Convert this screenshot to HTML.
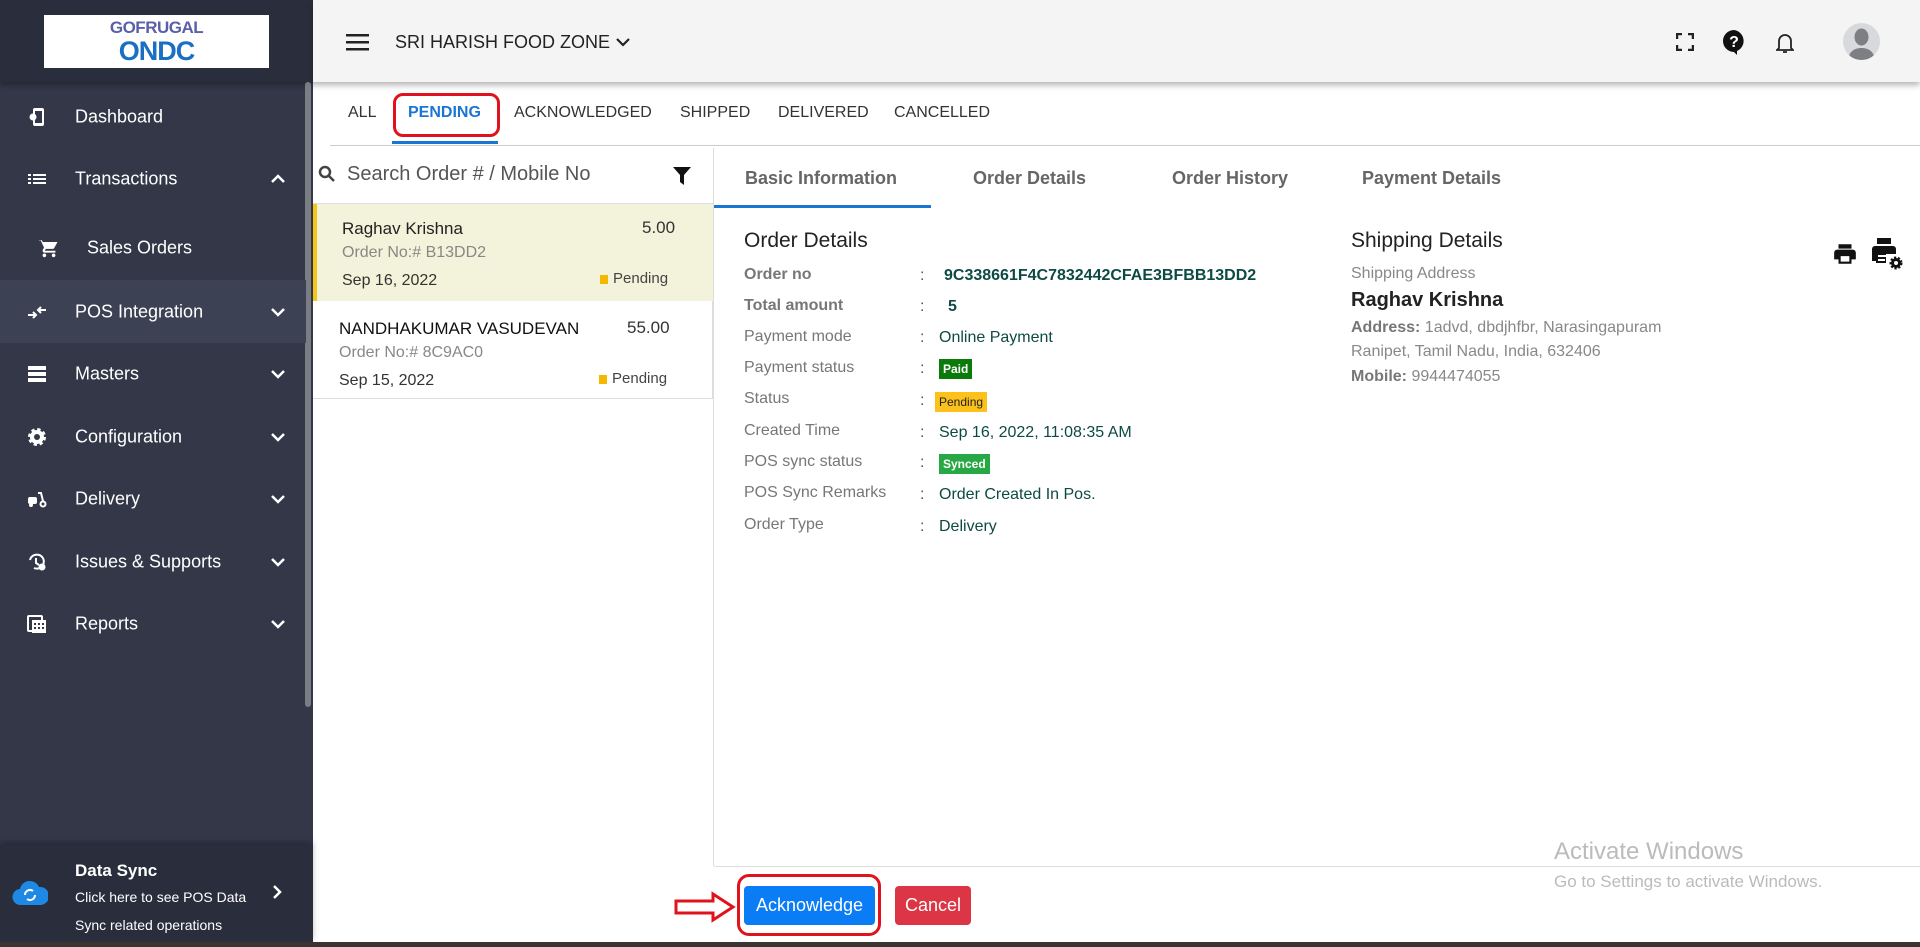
<!DOCTYPE html>
<html><head><meta charset="utf-8"><style>
*{box-sizing:border-box;margin:0;padding:0}
body{width:1920px;height:947px;overflow:hidden;background:#fff;font-family:"Liberation Sans",sans-serif;position:relative}
.abs{position:absolute}
#sb{left:0;top:0;width:313px;height:947px;background:#333748}
#logoarea{left:0;top:0;width:313px;height:82px;background:#2a2e3c;box-shadow:0 3px 6px rgba(0,0,0,.3)}
#logo{left:44px;top:15px;width:225px;height:53px;background:#fff;text-align:center}
.si{position:absolute;left:0;width:306px;height:60px;color:#fff;font-size:18px}
.si .t{position:absolute;left:75px;top:50%;transform:translateY(-50%)}
.si .ic{position:absolute;left:27px;top:50%;transform:translateY(-50%);width:20px;height:20px}
.si .ch{position:absolute;left:270px;top:50%;transform:translateY(-50%)}
#hdr{left:313px;top:0;width:1607px;height:82px;background:#f4f4f4;box-shadow:0 3px 6px rgba(0,0,0,.3)}
.tab{position:absolute;top:104px;font-size:16px;color:#333}
.lbl{position:absolute;left:744px;font-size:16px;color:#777}
.col{position:absolute;left:920px;font-size:16px;color:#555}
.val{position:absolute;left:939px;font-size:16px;color:#0d4a44}
.badge{display:inline-block;font-size:12px;font-weight:bold;padding:3px 4px;color:#fff}
</style></head><body>
<div id="sb" class="abs"></div>
<div id="logoarea" class="abs"><div id="logo" class="abs">
<div style="font-weight:bold;font-size:17px;color:#5a5fa8;margin-top:3px;letter-spacing:-0.5px">GOFRUGAL</div>
<div style="font-weight:bold;font-size:27px;color:#1b6fc2;line-height:26px;letter-spacing:-1px">ONDC</div></div></div>
<div class="abs" style="left:305px;top:82px;width:6px;height:625px;background:#7b7d85;border-radius:3px"></div>

<div class="si" style="top:87px"><svg class="ic" viewBox="0 0 20 20"><rect x="6" y="1" width="11" height="18" rx="2" fill="#fff"/><rect x="8" y="4" width="7" height="12" fill="#333748"/><circle cx="6" cy="10" r="3.5" fill="#fff"/></svg><span class="t">Dashboard</span></div>
<div class="si" style="top:149px"><svg class="ic" viewBox="0 0 20 20" fill="#fff"><rect x="1" y="5" width="3" height="2"/><rect x="6" y="5" width="13" height="2"/><rect x="1" y="9" width="3" height="2"/><rect x="6" y="9" width="13" height="2"/><rect x="1" y="13" width="3" height="2"/><rect x="6" y="13" width="13" height="2"/></svg><span class="t">Transactions</span><svg class="ch" width="16" height="10" viewBox="0 0 16 10"><path d="M2 8L8 2L14 8" stroke="#fff" stroke-width="2.5" fill="none"/></svg></div>
<div class="si" style="top:218px"><svg class="ic" style="left:38px;width:22px;height:22px" viewBox="0 0 24 24" fill="#fff"><path d="M7 18c-1.1 0-2 .9-2 2s.9 2 2 2 2-.9 2-2-.9-2-2-2zM1 2v2h2l3.6 7.6-1.4 2.4c-.1.3-.2.6-.2 1 0 1.1.9 2 2 2h12v-2H7.4l1.1-2h7.5c.8 0 1.4-.4 1.7-1l3.6-6.5H5.2l-.9-2H1zm16 16c-1.1 0-2 .9-2 2s.9 2 2 2 2-.9 2-2-.9-2-2-2z"/></svg><span class="t" style="left:87px">Sales Orders</span></div>
<div class="si" style="top:280px;height:63px;background:#3c4154;width:306px"><svg class="ic" viewBox="0 0 20 20" fill="none" stroke="#fff" stroke-width="2"><path d="M1 13h8M6 10l3 3-3 3M19 8h-8M14 5l-3 3 3 3"/></svg><span class="t">POS Integration</span><svg class="ch" width="16" height="10" viewBox="0 0 16 10"><path d="M2 2L8 8L14 2" stroke="#fff" stroke-width="2.5" fill="none"/></svg></div>
<div class="si" style="top:344px"><svg class="ic" viewBox="0 0 20 20" fill="#fff"><rect x="1" y="2" width="18" height="4"/><rect x="1" y="8" width="18" height="4"/><rect x="1" y="14" width="18" height="4"/></svg><span class="t">Masters</span><svg class="ch" width="16" height="10" viewBox="0 0 16 10"><path d="M2 2L8 8L14 2" stroke="#fff" stroke-width="2.5" fill="none"/></svg></div>
<div class="si" style="top:407px"><svg class="ic" viewBox="0 0 20 20"><circle cx="10" cy="10" r="7" fill="#fff" stroke="#fff" stroke-width="4" stroke-dasharray="3 2.5"/><circle cx="10" cy="10" r="3" fill="#333748"/></svg><span class="t">Configuration</span><svg class="ch" width="16" height="10" viewBox="0 0 16 10"><path d="M2 2L8 8L14 2" stroke="#fff" stroke-width="2.5" fill="none"/></svg></div>
<div class="si" style="top:469px"><svg class="ic" viewBox="0 0 20 20" fill="#fff"><rect x="1" y="8" width="9" height="7" rx="2"/><circle cx="4" cy="16" r="2"/><circle cx="16" cy="15" r="2.5" fill="none" stroke="#fff" stroke-width="2"/><path d="M11 4h3l2 8" stroke="#fff" stroke-width="2" fill="none"/></svg><span class="t">Delivery</span><svg class="ch" width="16" height="10" viewBox="0 0 16 10"><path d="M2 2L8 8L14 2" stroke="#fff" stroke-width="2.5" fill="none"/></svg></div>
<div class="si" style="top:532px"><svg class="ic" viewBox="0 0 20 20"><path d="M3 8a7 7 0 1 1 4 8" stroke="#fff" stroke-width="2" fill="none"/><path d="M9 6v5l3 2" stroke="#fff" stroke-width="2" fill="none"/><circle cx="15" cy="15" r="3.5" fill="#fff"/></svg><span class="t">Issues &amp; Supports</span><svg class="ch" width="16" height="10" viewBox="0 0 16 10"><path d="M2 2L8 8L14 2" stroke="#fff" stroke-width="2.5" fill="none"/></svg></div>
<div class="si" style="top:594px"><svg class="ic" viewBox="0 0 20 20" fill="#fff"><rect x="1" y="2" width="14" height="15" rx="1" fill="none" stroke="#fff" stroke-width="2"/><rect x="5" y="6" width="14" height="13"/><g fill="#333748"><rect x="7" y="9" width="2" height="2"/><rect x="11" y="9" width="2" height="2"/><rect x="15" y="9" width="2" height="2"/><rect x="7" y="13" width="2" height="2"/><rect x="11" y="13" width="2" height="2"/><rect x="15" y="13" width="2" height="2"/></g></svg><span class="t">Reports</span><svg class="ch" width="16" height="10" viewBox="0 0 16 10"><path d="M2 2L8 8L14 2" stroke="#fff" stroke-width="2.5" fill="none"/></svg></div>

<div class="abs" style="left:0;top:845px;width:313px;height:97px;background:#2a2e3c;box-shadow:0 -3px 6px rgba(0,0,0,.25)"></div>
<svg class="abs" style="left:12px;top:877px" width="36" height="32" viewBox="0 0 36 32"><path d="M9 28a8 8 0 0 1-1-16 10 10 0 0 1 19-2 8 8 0 0 1 2 18z" fill="#1e88e5"/><path d="M13 18a5 5 0 0 1 8-4M23 18a5 5 0 0 1-8 4" stroke="#fff" stroke-width="2" fill="none"/></svg>
<div class="abs" style="left:75px;top:861px;color:#fff;font-weight:bold;font-size:17px">Data Sync</div>
<div class="abs" style="left:75px;top:889px;color:#fff;font-size:14px">Click here to see POS Data</div>
<div class="abs" style="left:75px;top:917px;color:#fff;font-size:14px">Sync related operations</div>
<svg class="abs" style="left:272px;top:884px" width="10" height="16" viewBox="0 0 10 16"><path d="M2 2l6 6-6 6" stroke="#fff" stroke-width="2.5" fill="none"/></svg>
<div class="abs" style="left:0;top:942px;width:1920px;height:5px;background:#3a3530"></div>

<div id="hdr" class="abs"></div>
<svg class="abs" style="left:346px;top:33px" width="23" height="18" viewBox="0 0 23 18" fill="#222"><rect y="1" width="23" height="2.5"/><rect y="8" width="23" height="2.5"/><rect y="15" width="23" height="2.5"/></svg>
<div class="abs" style="left:395px;top:32px;font-size:18px;color:#222">SRI HARISH FOOD ZONE</div>
<svg class="abs" style="left:616px;top:37px" width="14" height="10" viewBox="0 0 14 10"><path d="M1 2l6 6 6-6" stroke="#222" stroke-width="2.2" fill="none"/></svg>
<svg class="abs" style="left:1676px;top:33px" width="18" height="18" viewBox="0 0 18 18" fill="none" stroke="#222" stroke-width="2.5"><path d="M1 6V1h5M12 1h5v5M17 12v5h-5M6 17H1v-5"/></svg>
<svg class="abs" style="left:1722px;top:29px" width="24" height="26" viewBox="0 0 24 26"><path d="M12 1a11 11 0 1 0 0 22l3 3v-4a11 11 0 0 0-3-21z" fill="#111"/><text x="12" y="18" font-size="16" font-weight="bold" fill="#fff" text-anchor="middle" font-family="Liberation Sans">?</text></svg>
<svg class="abs" style="left:1776px;top:32px" width="18" height="22" viewBox="0 0 18 22" fill="none" stroke="#222" stroke-width="1.8"><path d="M3 16V9a6 6 0 0 1 12 0v7l2 2H1zM7 20h4"/></svg>
<div class="abs" style="left:1843px;top:23px;width:37px;height:37px;border-radius:50%;background:#d7d9dc;overflow:hidden"><svg width="37" height="37" viewBox="0 0 37 37"><ellipse cx="18.5" cy="14" rx="7" ry="8.5" fill="#7d7f83"/><path d="M5 37c1-9 7-12 13.5-12S31 28 32 37z" fill="#7d7f83"/></svg></div>

<div class="tab" style="left:348px">ALL</div>
<div class="tab" style="left:408px;color:#1976d2;font-weight:bold">PENDING</div>
<div class="tab" style="left:514px">ACKNOWLEDGED</div>
<div class="tab" style="left:680px">SHIPPED</div>
<div class="tab" style="left:778px">DELIVERED</div>
<div class="tab" style="left:894px">CANCELLED</div>
<div class="abs" style="left:393px;top:93px;width:107px;height:44px;border:3px solid #e0121b;border-radius:10px"></div>
<div class="abs" style="left:392px;top:141px;width:106px;height:3px;background:#1976d2"></div>
<div class="abs" style="left:330px;top:145px;width:1590px;height:1px;background:#ccc"></div>

<svg class="abs" style="left:318px;top:165px" width="18" height="18" viewBox="0 0 18 18" fill="none" stroke="#444" stroke-width="2.5"><circle cx="7" cy="7" r="5"/><path d="M11 11l5 5"/></svg>
<div class="abs" style="left:347px;top:163px;font-size:20px;color:#555">Search Order # / Mobile No</div>
<svg class="abs" style="left:672px;top:166px" width="20" height="20" viewBox="0 0 20 20"><path d="M1 1h18l-7 8v10l-4-3V9z" fill="#111"/></svg>
<div class="abs" style="left:313px;top:203px;width:400px;height:1px;background:#ddd"></div>
<div class="abs" style="left:313px;top:204px;width:400px;height:97px;background:#f3f2da;border-left:4px solid #f5c518"></div>
<div class="abs" style="left:342px;top:219px;font-size:17px;color:#222">Raghav Krishna</div>
<div class="abs" style="left:642px;top:218px;font-size:17px;color:#333">5.00</div>
<div class="abs" style="left:342px;top:244px;font-size:16px;color:#888">Order No:# B13DD2</div>
<div class="abs" style="left:342px;top:272px;font-size:16px;color:#333">Sep 16, 2022</div>
<div class="abs" style="left:600px;top:275px;width:8px;height:9px;background:#f5b800"></div>
<div class="abs" style="left:613px;top:270px;font-size:15px;color:#444">Pending</div>
<div class="abs" style="left:313px;top:301px;width:400px;height:98px;border-bottom:1px solid #ddd;border-right:1px solid #ddd"></div>
<div class="abs" style="left:339px;top:319px;font-size:17px;color:#111">NANDHAKUMAR VASUDEVAN</div>
<div class="abs" style="left:627px;top:318px;font-size:17px;color:#333">55.00</div>
<div class="abs" style="left:339px;top:344px;font-size:16px;color:#888">Order No:# 8C9AC0</div>
<div class="abs" style="left:339px;top:372px;font-size:16px;color:#333">Sep 15, 2022</div>
<div class="abs" style="left:599px;top:375px;width:8px;height:9px;background:#f5b800"></div>
<div class="abs" style="left:612px;top:370px;font-size:15px;color:#444">Pending</div>

<div class="abs" style="left:713px;top:148px;width:1px;height:718px;background:#ddd"></div>
<div class="abs" style="left:714px;top:866px;width:1206px;height:1px;background:#ddd"></div>
<div class="abs" style="left:745px;top:168px;font-size:18px;font-weight:bold;color:#666">Basic Information</div>
<div class="abs" style="left:973px;top:168px;font-size:18px;font-weight:bold;color:#666">Order Details</div>
<div class="abs" style="left:1172px;top:168px;font-size:18px;font-weight:bold;color:#666">Order History</div>
<div class="abs" style="left:1362px;top:168px;font-size:18px;font-weight:bold;color:#666">Payment Details</div>
<div class="abs" style="left:714px;top:205px;width:217px;height:3px;background:#1976d2"></div>

<div class="abs" style="left:744px;top:229px;font-size:21px;color:#222">Order Details</div>
<div class="lbl" style="top:266px;font-weight:bold">Order no</div><div class="col" style="top:267px">:</div><div class="val" style="top:267px;left:944px;font-weight:bold">9C338661F4C7832442CFAE3BFBB13DD2</div>
<div class="lbl" style="top:297px;font-weight:bold">Total amount</div><div class="col" style="top:298px">:</div><div class="val" style="top:298px;left:948px;font-weight:bold">5</div>
<div class="lbl" style="top:328px">Payment mode</div><div class="col" style="top:329px">:</div><div class="val" style="top:329px">Online Payment</div>
<div class="lbl" style="top:359px">Payment status</div><div class="col" style="top:360px">:</div><div class="val" style="top:359px"><span class="badge" style="background:#0a7a0a">Paid</span></div>
<div class="lbl" style="top:390px">Status</div><div class="col" style="top:392px">:</div><div class="val" style="top:392px;left:935px"><span class="badge" style="background:#fcc21b;color:#222;font-weight:normal">Pending</span></div>
<div class="lbl" style="top:422px">Created Time</div><div class="col" style="top:424px">:</div><div class="val" style="top:424px">Sep 16, 2022, 11:08:35 AM</div>
<div class="lbl" style="top:453px">POS sync status</div><div class="col" style="top:454px">:</div><div class="val" style="top:454px"><span class="badge" style="background:#28a745">Synced</span></div>
<div class="lbl" style="top:484px">POS Sync Remarks</div><div class="col" style="top:486px">:</div><div class="val" style="top:486px">Order Created In Pos.</div>
<div class="lbl" style="top:516px">Order Type</div><div class="col" style="top:518px">:</div><div class="val" style="top:518px">Delivery</div>

<div class="abs" style="left:1351px;top:229px;font-size:21px;color:#222">Shipping Details</div>
<div class="abs" style="left:1351px;top:265px;font-size:16px;color:#888">Shipping Address</div>
<div class="abs" style="left:1351px;top:289px;font-size:20px;font-weight:bold;color:#222">Raghav Krishna</div>
<div class="abs" style="left:1351px;top:319px;font-size:16px;color:#888"><b style="color:#777">Address:</b> 1advd, dbdjhfbr, Narasingapuram</div>
<div class="abs" style="left:1351px;top:343px;font-size:16px;color:#888">Ranipet, Tamil Nadu, India, 632406</div>
<div class="abs" style="left:1351px;top:368px;font-size:16px;color:#888"><b style="color:#777">Mobile:</b> 9944474055</div>
<svg class="abs" style="left:1832px;top:241px" width="26" height="26" viewBox="0 0 24 24" fill="#111"><path d="M19 8H5c-1.7 0-3 1.3-3 3v6h4v4h12v-4h4v-6c0-1.7-1.3-3-3-3zm-3 11H8v-5h8v5zM18 3H6v4h12z"/></svg>
<svg class="abs" style="left:1872px;top:237px" width="32" height="34" viewBox="0 0 32 34" fill="#111"><path d="M5 1h14v6H5zM3 9h18a3 3 0 0 1 3 3v5H14v9H4v-2H0v-12a3 3 0 0 1 3-3z"/><path d="M6 18h8v2H6zM6 22h7v2H6z" fill="#fff"/><circle cx="24" cy="26" r="5" fill="#111" stroke="#111" stroke-width="3" stroke-dasharray="2 1.6"/><circle cx="24" cy="26" r="2" fill="#fff"/></svg>

<div class="abs" style="left:1554px;top:838px;font-size:24px;color:#bbb">Activate Windows</div>
<div class="abs" style="left:1554px;top:872px;font-size:17px;color:#bbb">Go to Settings to activate Windows.</div>

<svg class="abs" style="left:673px;top:891px" width="64" height="32" viewBox="0 0 64 32"><path d="M3 10h37V3l20 13-20 13v-7H3z" fill="#fff" stroke="#e0121b" stroke-width="3"/></svg>
<div class="abs" style="left:737px;top:874px;width:144px;height:62px;border:3px solid #e0121b;border-radius:12px"></div>
<div class="abs" style="left:744px;top:886px;width:131px;height:39px;background:#0a7cf5;border-radius:4px;color:#fff;font-size:18px;text-align:center;line-height:39px">Acknowledge</div>
<div class="abs" style="left:895px;top:886px;width:76px;height:39px;background:#dc3545;border-radius:4px;color:#fff;font-size:18px;text-align:center;line-height:39px">Cancel</div>
</body></html>
